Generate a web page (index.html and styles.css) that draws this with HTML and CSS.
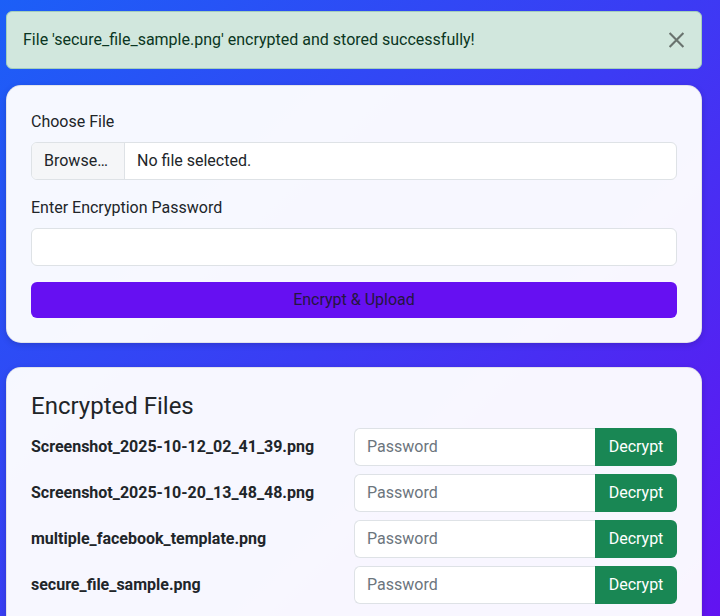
FILE: index.html
```html
<!DOCTYPE html>
<html lang="en">
<head>
<meta charset="utf-8">
<title>Secure File Storage</title>
<link rel="stylesheet" href="styles.css">
</head>
<body>
<main class="page">
  <div class="alert">
    <span>File 'secure_file_sample.png' encrypted and stored successfully!</span>
    <button class="btn-close" type="button" aria-label="Close">
      <svg viewBox="0 0 16 16" width="17" height="17" aria-hidden="true"><path d="M1.5 1.5 L14.5 14.5 M14.5 1.5 L1.5 14.5" stroke="currentColor" stroke-width="2" fill="none"/></svg>
    </button>
  </div>

  <section class="card">
    <label class="form-label">Choose File</label>
    <div class="file-input">
      <span class="file-btn">Browse…</span>
      <span class="file-name">No file selected.</span>
    </div>
    <label class="form-label" for="pw">Enter Encryption Password</label>
    <input class="form-control" id="pw" type="password">
    <button class="btn-encrypt" type="button">Encrypt &amp; Upload</button>
  </section>

  <section class="card card-files">
    <h4 class="files-title">Encrypted Files</h4>
    <div class="file-row">
      <span class="fname">Screenshot_2025-10-12_02_41_39.png</span>
      <div class="input-group">
        <input class="group-input" type="password" placeholder="Password">
        <button class="btn-decrypt" type="button">Decrypt</button>
      </div>
    </div>
    <div class="file-row">
      <span class="fname">Screenshot_2025-10-20_13_48_48.png</span>
      <div class="input-group">
        <input class="group-input" type="password" placeholder="Password">
        <button class="btn-decrypt" type="button">Decrypt</button>
      </div>
    </div>
    <div class="file-row">
      <span class="fname">multiple_facebook_template.png</span>
      <div class="input-group">
        <input class="group-input" type="password" placeholder="Password">
        <button class="btn-decrypt" type="button">Decrypt</button>
      </div>
    </div>
    <div class="file-row">
      <span class="fname">secure_file_sample.png</span>
      <div class="input-group">
        <input class="group-input" type="password" placeholder="Password">
        <button class="btn-decrypt" type="button">Decrypt</button>
      </div>
    </div>
  </section>
</main>
</body>
</html>
```
FILE: styles.css
```css
* { box-sizing: border-box; }
html {
  min-height: 100%;
  background: linear-gradient(135deg, #1c5ff7 0%, #3b3cf4 50%, #6213f1 100%) fixed;
}
body {
  margin: 0;
  font-family: Roboto, "Noto Sans", sans-serif;
  font-size: 16px;
  line-height: 1.5;
  color: #212529;
}
.page {
  padding: 11px 18px 24px 6px;
}
.alert {
  position: relative;
  display: flex;
  align-items: center;
  min-height: 58px;
  padding: 16px 48px 16px 16px;
  margin-bottom: 16px;
  background: #d1e7dd;
  border: 1px solid #a3cfbb;
  border-radius: 6px;
  color: #0a3622;
}
.btn-close {
  position: absolute;
  top: 50%;
  right: 16px;
  transform: translateY(-50%);
  display: flex;
  padding: 0;
  border: 0;
  background: none;
  color: #69736e;
}
.card {
  background: rgba(255, 255, 255, 0.96);
  border: 1px solid rgba(0, 0, 0, 0.08);
  border-radius: 15px;
  box-shadow: 0 2px 6px rgba(0, 0, 0, 0.15);
  padding: 24px;
  margin-bottom: 24px;
}
.form-label {
  display: block;
  margin-bottom: 8px;
}
.file-input {
  display: flex;
  height: 38px;
  margin-bottom: 16px;
  background: #fff;
  border: 1px solid #dee2e6;
  border-radius: 6px;
  overflow: hidden;
}
.file-btn {
  display: flex;
  align-items: center;
  flex: 0 0 93px;
  padding: 0 12px;
  background: #f5f6f8;
  border-right: 1px solid #dee2e6;
}
.file-name {
  display: flex;
  align-items: center;
  padding: 0 12px;
}
.form-control {
  display: block;
  width: 100%;
  height: 38px;
  margin-bottom: 16px;
  padding: 0 12px;
  background: #fff;
  border: 1px solid #dee2e6;
  border-radius: 6px;
  font: inherit;
}
.btn-encrypt {
  display: block;
  width: 100%;
  height: 36px;
  border: 0;
  border-radius: 6px;
  background: #6610f2;
  color: #25173f;
  font: inherit;
}
.card-files {
  padding-bottom: 40px;
}
.files-title {
  margin: 0 0 7px;
  font-size: 24px;
  font-weight: 400;
  line-height: 1.2;
}
.file-row {
  display: flex;
  align-items: center;
  justify-content: space-between;
  margin-bottom: 8px;
}
.fname {
  font-weight: 700;
}
.input-group {
  display: flex;
  width: 50%;
  height: 38px;
}
.group-input {
  flex: 1;
  min-width: 0;
  padding: 0 12px;
  border: 1px solid #dee2e6;
  border-right: 0;
  border-radius: 6px 0 0 6px;
  background: #fff;
  font: inherit;
  color: #212529;
}
.group-input::placeholder {
  color: #6c757d;
}
.btn-decrypt {
  width: 82px;
  padding: 0 12px;
  border: 0;
  border-radius: 0 6px 6px 0;
  background: #198754;
  color: #fff;
  font: inherit;
}
```
